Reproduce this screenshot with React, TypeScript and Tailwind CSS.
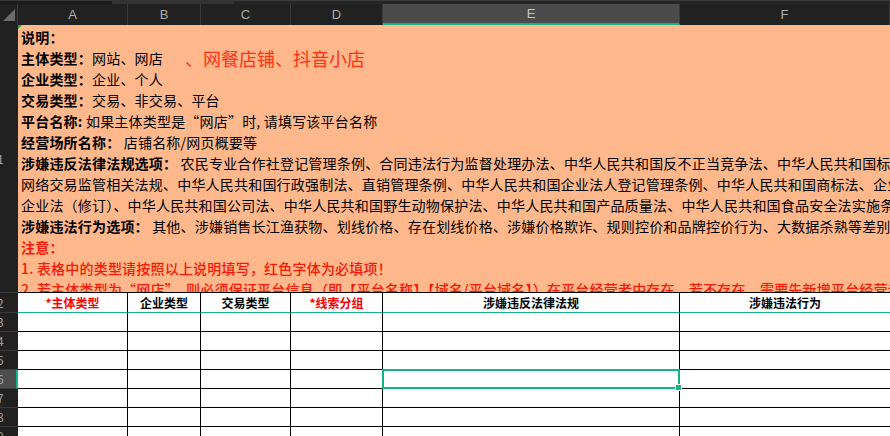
import React from 'react';

const COLS = [
  { letter: 'A', w: 'w-[110px]', title: '*主体类型', red: true },
  { letter: 'B', w: 'w-[73px]', title: '企业类型', red: false },
  { letter: 'C', w: 'w-[90px]', title: '交易类型', red: false },
  { letter: 'D', w: 'w-[92px]', title: '*线索分组', red: true },
  { letter: 'E', w: 'w-[297px]', title: '涉嫌违反法律法规', red: false },
  { letter: 'F', w: 'flex-1', title: '涉嫌违法行为', red: false },
];

const NOTE_LINES: { label?: string; text?: string; red?: boolean; bold?: boolean }[] = [
  { label: '说明：' },
  { label: '企业类型：', text: '企业、个人' },
  { label: '交易类型：', text: '交易、非交易、平台' },
  { label: '平台名称: ', text: '如果主体类型是“网店”时, 请填写该平台名称' },
  { label: '经营场所名称：', text: ' 店铺名称/网页概要等' },
  {
    label: '涉嫌违反法律法规选项：',
    text: ' 农民专业合作社登记管理条例、合同违法行为监督处理办法、中华人民共和国反不正当竞争法、中华人民共和国标准化法',
  },
  {
    text: '网络交易监管相关法规、中华人民共和国行政强制法、直销管理条例、中华人民共和国企业法人登记管理条例、中华人民共和国商标法、企业名称登记管理规定',
  },
  {
    text: '企业法（修订）、中华人民共和国公司法、中华人民共和国野生动物保护法、中华人民共和国产品质量法、中华人民共和国食品安全法实施条例',
  },
  {
    label: '涉嫌违法行为选项：',
    text: ' 其他、涉嫌销售长江渔获物、划线价格、存在划线价格、涉嫌价格欺诈、规则控价和品牌控价行为、大数据杀熟等差别待遇',
  },
  { text: '注意：', red: true, bold: true },
  { text: '1. 表格中的类型请按照以上说明填写，红色字体为必填项！', red: true },
  {
    text: '2. 若主体类型为“网店”，则必须保证平台信息（即【平台名称】【域名/平台域名】）在平台经营者中存在，若不存在，需要先新增平台经营者',
    red: true,
  },
];

function RowHeader({ n, h, active }: { n: number; h: string; active?: boolean }) {
  return (
    <div
      className={`${h} w-[18px] shrink-0 flex items-center overflow-hidden border-b border-[#3a3a3a] ${
        active ? 'bg-[#4d4d4d] border-r-2 border-r-[#12b386]' : 'bg-[#212121]'
      }`}
    >
      <span className="-ml-[3px] text-[12px] text-[#a3a3a3]">{n}</span>
    </div>
  );
}

function NoteLine({ line }: { line: (typeof NOTE_LINES)[number] }) {
  return (
    <div
      className={`h-[21px] leading-[21px] whitespace-nowrap ${
        line.red ? 'text-[#f21a08] font-medium' : 'text-black'
      } ${line.bold ? 'font-semibold' : ''}`}
    >
      {line.label && <span className="font-bold">{line.label}</span>}
      {line.text}
    </div>
  );
}

export default function App() {
  const dataRows = [3, 4, 5, 6, 7, 8, 9];

  return (
    <div
      className="w-[890px] h-[436px] overflow-hidden bg-[#212121] flex flex-col"
      style={{ fontFamily: '"Noto Sans CJK SC", "Noto Sans", sans-serif' }}
    >
      {/* top strip */}
      <div className="h-[4px] shrink-0 flex">
        <div className="w-[112px] border-t border-[#3a3a3a] bg-[#1c1c1c]" />
        <div className="w-[121px] bg-[#333333]" />
        <div className="flex-1 border-t border-[#3a3a3a] bg-[#262626]" />
      </div>

      {/* column headers */}
      <div className="h-[21px] shrink-0 flex" style={{ fontFamily: '"Liberation Sans", sans-serif' }}>
        <div className="w-[18px] shrink-0 relative bg-[#212121] border-r border-[#3a3a3a]">
          <svg className="absolute left-[3px] top-[5px]" width="12" height="12" viewBox="0 0 12 12">
            <polygon points="12,0 12,12 0,12" fill="#6a6a6a" />
          </svg>
        </div>
        {COLS.map((c) => (
          <div
            key={c.letter}
            className={`${c.w} shrink-0 flex items-center justify-center text-[13px] border-r border-[#3a3a3a] ${
              c.letter === 'E'
                ? 'bg-[#4b4b4b] text-[#c4c4c4] border-b-2 border-b-[#12b386]'
                : 'bg-[#212121] text-[#ababab]'
            }`}
          >
            {c.letter}
          </div>
        ))}
      </div>

      {/* row 1: merged notes cell */}
      <div className="flex shrink-0">
        <RowHeader n={1} h="h-[268px]" />
        <div className="relative flex-1 h-[268px] bg-[#ffb88b] border-b border-black overflow-hidden pl-[3px] pt-[2px] text-[14px] tracking-[0.2px]">
          <svg className="absolute left-0 top-0" width="4" height="4" viewBox="0 0 4 4">
            <polygon points="0,0 4,0 0,4" fill="#18a84a" />
          </svg>
          <NoteLine line={NOTE_LINES[0]} />
          <div className="h-[21px] leading-[21px] whitespace-nowrap text-black flex items-center">
            <span className="font-bold">主体类型：</span>
            <span>网站、网店</span>
            <span className="ml-[22px] text-[18px] tracking-normal text-[#ff3015]">、网餐店铺、抖音小店</span>
          </div>
          {NOTE_LINES.slice(1).map((line, i) => (
            <NoteLine key={i} line={line} />
          ))}
        </div>
      </div>

      {/* row 2: table header */}
      <div className="flex shrink-0">
        <RowHeader n={2} h="h-[20px]" />
        {COLS.map((c) => (
          <div
            key={c.letter}
            className={`${c.w} shrink-0 h-[20px] bg-white flex items-center justify-center text-[12px] font-bold border-b border-b-[#12b386] ${
              c.letter === 'F' ? '' : 'border-r border-r-black'
            } ${c.red ? 'text-[#ff0000]' : 'text-black'}`}
          >
            {c.title}
          </div>
        ))}
      </div>

      {/* data rows */}
      {dataRows.map((r) => (
        <div key={r} className="flex shrink-0">
          <RowHeader n={r} h="h-[19px]" active={r === 6} />
          {COLS.map((c) => (
            <div
              key={c.letter}
              className={`${c.w} shrink-0 h-[19px] bg-white border-b border-b-black relative ${
                c.letter === 'F' ? '' : 'border-r border-r-black'
              } ${r === 6 && c.letter === 'E' ? 'z-10' : ''}`}
            >
              {r === 6 && c.letter === 'E' && (
                <div className="absolute -left-[1px] -top-[1px] -right-[1px] -bottom-[1px] border-2 border-[#12b386]">
                  <div className="absolute -right-[4px] -bottom-[4px] w-[7px] h-[7px] bg-[#12b386] border border-white" />
                </div>
              )}
            </div>
          ))}
        </div>
      ))}
    </div>
  );
}
